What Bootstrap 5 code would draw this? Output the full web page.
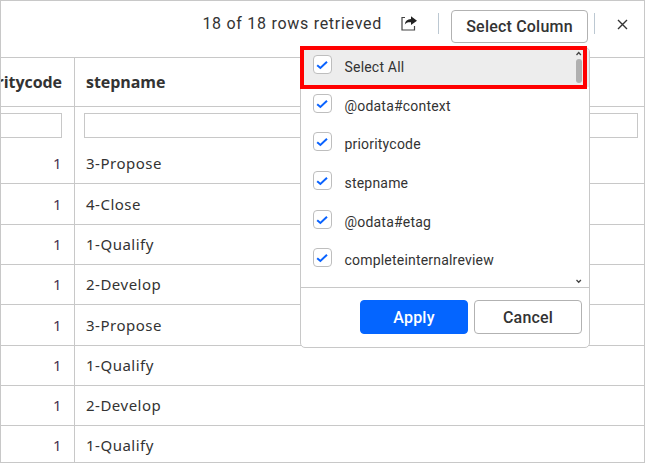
<!DOCTYPE html>
<html lang="en">
<head>
<meta charset="utf-8">
<title>Rows</title>
<link href="https://cdn.jsdelivr.net/npm/bootstrap@5.3.0/dist/css/bootstrap.min.css" rel="stylesheet">
<style>
body{font-family:Roboto,"Liberation Sans",sans-serif;color:#333;background:#fff}
.viewer{width:645px;height:463px;border:1px solid #c8c8c8}
.topbar{height:57px;border-bottom:1px solid #c8c8c8;padding:9px 16px 0 0}
.status{font-size:16px;letter-spacing:.72px;line-height:27px;margin-right:19px}
.export-icon{margin:6px 21px 0 0}
.vline{width:1px;height:21px;background:#bcc8d2;margin-top:3px}
.btn-pick,.btn-drop{--bs-btn-padding-x:0;--bs-btn-padding-y:0;--bs-btn-border-color:#b2b2b2;--bs-btn-color:#333;--bs-btn-bg:#fff;--bs-btn-border-radius:4px;--bs-btn-font-weight:500;font-size:16px;letter-spacing:.2px}
.btn-pick{width:137px;height:33px;line-height:31px;margin:0 6px 0 12px}
.btn-drop{width:108px;height:34px;line-height:31px}
.btn-apply{--bs-btn-bg:#0465ff;--bs-btn-border-color:#0465ff;--bs-btn-color:#fff}
.close-icon{margin:9px 0 0 22px}
.grid{table-layout:fixed;width:643px;border-collapse:separate;border-spacing:0;font-family:"Noto Sans","Open Sans",sans-serif;font-size:15px;line-height:20px;letter-spacing:.5px}
.grid th,.grid td{padding:0 12px 0 11px;border-bottom:1px solid #c8c8c8;vertical-align:middle;white-space:nowrap}
.grid th:first-child,.grid td:first-child{border-right:1px solid #c8c8c8;text-align:right;padding-left:0}
.grid th{height:49px;font-family:"Open Sans","Noto Sans",sans-serif;font-size:16px;letter-spacing:-.05px}
.grid td:first-child{color:#4a3350}
.grid .h40 td{height:40px;padding-bottom:2px}
.grid .h41 td{height:41px}
.grid .last td{height:37px;border-bottom:0}
.grid .filters td{height:36px;border-bottom:0;padding:6px 0 0;vertical-align:top}
.fbox{height:25px;border:1px solid #c8c8c8}
.fbox-a{width:61px;border-left:0}
.fbox-b{width:554px;margin-left:9px}
.clip{display:flex;justify-content:flex-end;overflow:hidden}
.chooser{left:300px;top:47px;width:290px;height:301px;border:1px solid #c8c8c8;border-radius:5px;background:#fff;overflow:hidden}
.options{height:240px;border-bottom:1px solid #c8c8c8}
.opt{height:38.7px;padding:7px 0 0 12px;font-size:14px;letter-spacing:.2px;line-height:25px}
.opt-on{background:#ededed}
.tick{width:19px;height:19px;border:1px solid #bebebe;border-radius:4px;background:#fff;margin-right:12.5px;flex:none}
.tick svg{display:block}
.foot{padding:12px 7px 0 0;gap:6px}
.scroller{left:575px;top:50px}
.scroll-down{left:575px;top:278px}
.marker{left:300px;top:46px;width:287px;height:43px;border:4px solid #f00}
</style>
</head>
<body>
<svg class="d-none"><symbol id="ck" viewBox="0 0 17 17"><path d="M3.2 9.2 6.4 12 13 5.8" fill="none" stroke="#0a63ff" stroke-width="2"/></symbol></svg>
<div class="viewer position-relative overflow-hidden">
  <header class="topbar d-flex align-items-start justify-content-end">
    <span class="status">18 of 18 rows retrieved</span>
    <svg class="export-icon" width="16" height="15" viewBox="0 0 16 15"><path d="M4 1.5H1V14h12.5v-4" fill="none" stroke="#444" stroke-width="1.2"/><path d="M3.8 8.5C4.3 4.8 6.3 3.1 10 3V.2L16 4.8 10 9V6.3C7.2 6 5.3 6.5 3.8 8.5Z" fill="#222"/></svg>
    <span class="vline"></span>
    <button class="btn btn-pick">Select Column</button>
    <span class="vline"></span>
    <svg class="close-icon" width="11" height="11" viewBox="0 0 11 11"><path d="M1 1 10 10M10 1 1 10" stroke="#333" stroke-width="1.4"/></svg>
  </header>
  <table class="grid">
    <colgroup><col style="width:74px"><col></colgroup>
    <thead><tr><th><div class="clip"><span>prioritycode</span></div></th><th>stepname</th></tr></thead>
    <tbody>
      <tr class="filters"><td><div class="fbox fbox-a"></div></td><td><div class="fbox fbox-b"></div></td></tr>
      <tr class="h41"><td>1</td><td>3-Propose</td></tr>
      <tr class="h41"><td>1</td><td>4-Close</td></tr>
      <tr class="h40"><td>1</td><td>1-Qualify</td></tr>
      <tr class="h40"><td>1</td><td>2-Develop</td></tr>
      <tr class="h41"><td>1</td><td>3-Propose</td></tr>
      <tr class="h40"><td>1</td><td>1-Qualify</td></tr>
      <tr class="h40"><td>1</td><td>2-Develop</td></tr>
      <tr class="last"><td>1</td><td>1-Qualify</td></tr>
    </tbody>
  </table>
</div>
<div class="chooser position-absolute">
  <div class="options overflow-hidden">
    <div class="opt opt-on d-flex"><span class="tick"><svg width="17" height="17"><use href="#ck"/></svg></span>Select All</div>
    <div class="opt d-flex"><span class="tick"><svg width="17" height="17"><use href="#ck"/></svg></span>@odata#context</div>
    <div class="opt d-flex"><span class="tick"><svg width="17" height="17"><use href="#ck"/></svg></span>prioritycode</div>
    <div class="opt d-flex"><span class="tick"><svg width="17" height="17"><use href="#ck"/></svg></span>stepname</div>
    <div class="opt d-flex"><span class="tick"><svg width="17" height="17"><use href="#ck"/></svg></span>@odata#etag</div>
    <div class="opt d-flex"><span class="tick"><svg width="17" height="17"><use href="#ck"/></svg></span>completeinternalreview</div>
  </div>
  <div class="foot d-flex justify-content-end">
    <button class="btn btn-drop btn-apply">Apply</button>
    <button class="btn btn-drop">Cancel</button>
  </div>
</div>
<svg class="scroller position-absolute" width="8" height="34" viewBox="0 0 8 34"><path d="M1.5 5 3.7 2.5 5.9 5" fill="none" stroke="#444" stroke-width="1.3"/><rect x="1" y="9" width="6" height="24" rx="3" fill="#b0b0b0"/></svg>
<svg class="scroll-down position-absolute" width="8" height="8" viewBox="0 0 8 8"><path d="M1.5 2 3.7 4.3 5.9 2" fill="none" stroke="#444" stroke-width="1.3"/></svg>
<div class="marker position-absolute"></div>
<script src="https://cdn.jsdelivr.net/npm/bootstrap@5.3.0/dist/js/bootstrap.bundle.min.js"></script>
</body>
</html>
